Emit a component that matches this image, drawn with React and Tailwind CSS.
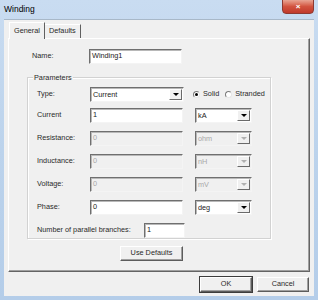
import React from 'react';

const font = { fontFamily: '"Liberation Sans", Arial, sans-serif' };

const Sunken = ({ className = '', disabled = false, children }) => (
  <div
    className={`flex items-center h-[15px] pl-[2px] border border-t-[#6f6f6f] border-l-[#6f6f6f] border-b-[#f4f4f4] border-r-[#f4f4f4] shadow-[inset_1px_1px_0_#b8b8b8] ${
      disabled ? 'bg-[#f0f0f0] text-[#a8a8a8]' : 'bg-white text-[#222]'
    } ${className}`}
  >
    {children}
  </div>
);

const Arrow = ({ disabled }) => (
  <div className="w-[13px] h-[11px] mr-[1px] flex items-center justify-center bg-[#f0f0f0] border border-t-white border-l-white border-b-[#6a6a6a] border-r-[#6a6a6a]">
    <div
      className={`w-0 h-0 border-l-[3px] border-r-[3px] border-t-[3px] border-l-transparent border-r-transparent ${
        disabled ? 'border-t-[#b0b0b0]' : 'border-t-black'
      }`}
    />
  </div>
);

const Combo = ({ value, disabled = false, className = '' }) => (
  <Sunken disabled={disabled} className={`justify-between ${className}`}>
    <span className="leading-none">{value}</span>
    <Arrow disabled={disabled} />
  </Sunken>
);

const Button = ({ children, className = '', isDefault = false }) => (
  <div
    className={`flex items-center justify-center h-[15px] bg-[#f0f0f0] border border-t-white border-l-white border-b-[#5c5c5c] border-r-[#5c5c5c] shadow-[inset_-1px_-1px_0_#a0a0a0] ${
      isDefault ? 'outline outline-1 outline-[#3c3c3c]' : ''
    } ${className}`}
  >
    {children}
  </div>
);

const Radio = ({ checked }) => (
  <div className="w-[7px] h-[7px] rounded-full bg-white border border-t-[#7a7a7a] border-l-[#7a7a7a] border-b-[#e6e6e6] border-r-[#e6e6e6] flex items-center justify-center">
    {checked && <div className="w-[3px] h-[3px] rounded-full bg-black" />}
  </div>
);

const Row = ({ label, children, className = '' }) => (
  <div className={`flex items-center h-[15px] ${className}`}>
    <span className="w-[53px] pl-[9px] box-content shrink-0">{label}</span>
    {children}
  </div>
);

export default function App() {
  const rows = [
    { label: 'Resistance:', unit: 'ohm' },
    { label: 'Inductance:', unit: 'nH' },
    { label: 'Voltage:', unit: 'mV' },
  ];

  return (
    <div
      className="w-[318px] h-[300px] bg-gradient-to-b from-[#c9dcf1] via-[#bcd3ec] to-[#b4cde9] flex flex-col text-[7.3px] text-[#2a2a2a]"
      style={font}
    >
      {/* title bar */}
      <div className="h-[19px] flex items-start justify-between pl-[4px] pr-[4px] shrink-0">
        <span className="mt-[3px] text-[8.5px] text-black">Winding</span>
        <div className="w-[32px] h-[15px] mt-[-1px] rounded-b-[4px] border border-[#8d3a32] bg-gradient-to-b from-[#e8a493] via-[#d2533f] to-[#c0392b] flex items-center justify-center">
          <span className="text-white font-bold text-[8px] leading-none">×</span>
        </div>
      </div>

      {/* client area */}
      <div className="mx-[4px] h-[277px] bg-[#f0f0f0] border-t border-t-[#a8b8c8] flex flex-col">
        {/* tabs */}
        <div className="flex items-end h-[18px] pl-[5px]">
          <div className="h-[17px] px-[4px] flex items-center border-t border-l border-t-white border-l-white border-r border-r-[#606060] bg-[#f0f0f0] relative z-10 mb-[-1px]">
            General
          </div>
          <div className="h-[14px] px-[4px] flex items-center border-t border-t-white border-r border-r-[#606060]">
            Defaults
          </div>
        </div>

        {/* tab panel */}
        <div className="ml-[4px] w-[302px] h-[234px] border border-t-white border-l-white border-b-[#646464] border-r-[#646464] shadow-[inset_-1px_-1px_0_#a0a0a0] flex flex-col">
          <div className="flex items-center h-[15px] mt-[10px]">
            <span className="w-[57px] pl-[23px] box-content shrink-0">Name:</span>
            <Sunken className="w-[93px]">Winding1</Sunken>
          </div>

          {/* group box */}
          <div className="ml-[18px] mt-[13px] w-[244px] h-[162px] border border-[#d2d2d2] shadow-[inset_1px_1px_0_#ffffff,1px_1px_0_#ffffff] flex flex-col">
            <span className="ml-[5px] mt-[-5px] px-[1px] bg-[#f0f0f0] self-start leading-[9px]">Parameters</span>
            <div className="flex flex-col pt-[5px]">
              <Row label="Type:">
                <Combo value="Current" className="w-[94px]" />
                <div className="flex items-center ml-[9px] gap-[3px]">
                  <Radio checked />
                  <span>Solid</span>
                  <div className="ml-[3px]">
                    <Radio />
                  </div>
                  <span>Stranded</span>
                </div>
              </Row>
              <Row label="Current" className="mt-[6px]">
                <Sunken className="w-[93px]">1</Sunken>
                <Combo value="kA" className="w-[57px] ml-[12px]" />
              </Row>
              {rows.map((r) => (
                <Row key={r.label} label={r.label} className="mt-[8px]">
                  <Sunken disabled className="w-[93px]">0</Sunken>
                  <Combo value={r.unit} disabled className="w-[57px] ml-[12px]" />
                </Row>
              ))}
              <Row label="Phase:" className="mt-[8px]">
                <Sunken className="w-[93px]">0</Sunken>
                <Combo value="deg" className="w-[57px] ml-[12px]" />
              </Row>
              <div className="flex items-center h-[15px] mt-[8px]">
                <span className="w-[107px] pl-[9px] box-content shrink-0">Number of parallel branches:</span>
                <Sunken className="w-[41px]">1</Sunken>
              </div>
            </div>
          </div>

          <div className="flex justify-start ml-[111px] mt-[7px]">
            <Button className="w-[63px]">Use Defaults</Button>
          </div>
        </div>

        {/* bottom buttons */}
        <div className="flex justify-end gap-[5px] mt-[5px] mr-[5px]">
          <Button isDefault className="w-[52px]">OK</Button>
          <Button className="w-[52px]">Cancel</Button>
        </div>
      </div>
    </div>
  );
}
